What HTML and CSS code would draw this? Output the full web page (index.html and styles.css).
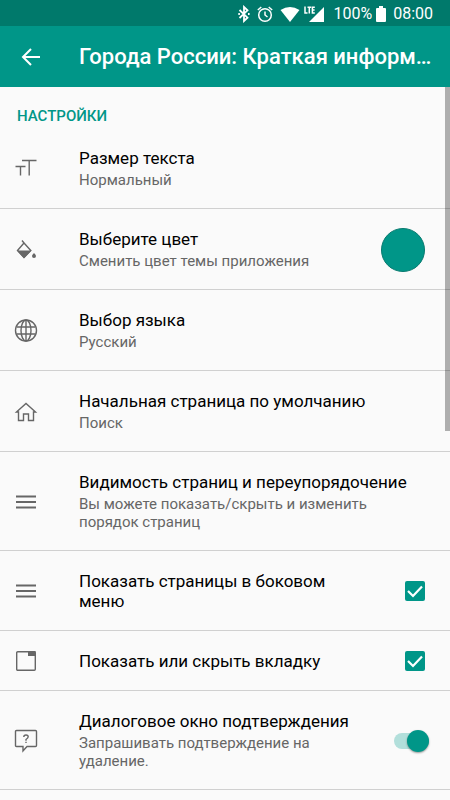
FILE: index.html
```html
<!DOCTYPE html>
<html lang="ru">
<head>
<meta charset="utf-8">
<meta name="viewport" content="width=device-width, initial-scale=1">
<title>Города России: Краткая информация</title>
<link rel="stylesheet" href="styles.css">
</head>
<body>
<div class="status">
  <svg width="12" height="18" viewBox="0 0 12 18" fill="none" stroke="#fff" stroke-width="1.8"><path d="M1.500 5l8 7.700L6 16V2l3.500 3.300-8 7.700"/><path d="M.3 9h1.600M10 9h1.600"/></svg>
  <svg class="alarm" width="16" height="18" viewBox="0 0 16 18" fill="none" stroke="#fff" stroke-width="1.500"><circle cx="8" cy="10" r="6.300"/><path d="M8 6.500V10l2.500 2M.8 5l3.500-3M15.200 5l-3.500-3"/></svg>
  <svg class="wifi" width="20" height="18" viewBox="0 0 20 18" fill="#fff"><path d="M.5 5Q10-1 19.500 5L10 17z"/></svg>
  <svg class="signal" width="20" height="18" viewBox="0 0 20 18"><path fill="#fff" d="M20 2v15H5z"/><path d="M0 1h11v9H0z" fill="#00796b"/><path fill="none" stroke="#fff" stroke-width="1.500" d="M1 1.500V8h2.500M3.500 2.200H7.200M5.300 2v6.500M10.800 2.200H8.400v5.700h2.400M8.400 5h2.200"/></svg>
  <span class="percent">100%</span>
  <svg class="battery" width="10" height="18" viewBox="0 0 10 18" fill="#fff"><path d="M3 1h4v2h2q1 0 1 1v12q0 1-1 1H1q-1 0-1-1V4q0-1 1-1h2z"/></svg>
  <span>08:00</span>
</div>
<header class="bar">
  <button class="back" aria-label="Назад"><svg width="24" height="24" viewBox="0 0 24 24" fill="none" stroke="#fff" stroke-width="2"><path d="M22 12H5M13 4L5 12l8 8"/></svg></button>
  <h1>Города России: Краткая информация</h1>
</header>
<main class="list">
  <h2>НАСТРОЙКИ</h2>
  <button class="row">
    <svg class="icon" viewBox="0 0 24 24"><path d="M8 3.500h14.500M15.200 3.500V18.500M1.500 9.500h10M6.500 9.500v9"/></svg>
    <span class="text"><span class="title">Размер текста</span><span class="sub">Нормальный</span></span>
  </button>
  <button class="row">
    <svg class="icon" viewBox="0 0 24 24"><path d="M8 2.500l2 2.500L3.500 12.500 10 19.500 16.800 12.500 10 5"/><path class="solid" d="M3 12.500h14.500L10 20.300zM20 15q2 2 2 3a2 2 0 0 1-4 0q0-1 2-3z"/></svg>
    <span class="text"><span class="title">Выберите цвет</span><span class="sub">Сменить цвет темы приложения</span></span>
    <span class="widget"><span class="swatch"></span></span>
  </button>
  <button class="row">
    <svg class="icon" viewBox="0 0 24 24"><circle cx="12" cy="11.500" r="10.500"/><ellipse cx="12" cy="11.500" rx="5" ry="10.500"/><path d="M12 1v21M2.500 8h19M2.500 15h19"/></svg>
    <span class="text"><span class="title">Выбор языка</span><span class="sub">Русский</span></span>
  </button>
  <button class="row">
    <svg class="icon" viewBox="0 0 24 24"><path d="M2.500 12l9.500-8.500 9.500 8.500h-2v8.500H14.500V14h-5v6.500H4.500V12z"/></svg>
    <span class="text"><span class="title">Начальная страница по умолчанию</span><span class="sub">Поиск</span></span>
  </button>
  <button class="row">
    <svg class="icon bars" viewBox="0 0 24 24"><path d="M2 6.500h20M2 12h20M2 17.500h20"/></svg>
    <span class="text"><span class="title">Видимость страниц и переупорядочение</span><span class="sub">Вы можете показать/скрыть и изменить порядок страниц</span></span>
  </button>
  <label class="row">
    <svg class="icon bars" viewBox="0 0 24 24"><path d="M2 6.500h20M2 12h20M2 17.500h20"/></svg>
    <span class="text"><span class="title">Показать страницы в боковом меню</span></span>
    <span class="widget check"><input type="checkbox" checked><svg viewBox="0 0 20 20"><path d="M3 10l5 5L17 5.500"/></svg></span>
  </label>
  <label class="row">
    <svg class="icon" viewBox="0 0 24 24"><rect x="2.700" y="2.700" width="18.600" height="18.600" rx="1"/><path class="solid" d="M14 2h7.500v5H14z"/></svg>
    <span class="text"><span class="title">Показать или скрыть вкладку</span></span>
    <span class="widget check"><input type="checkbox" checked><svg viewBox="0 0 20 20"><path d="M3 10l5 5L17 5.500"/></svg></span>
  </label>
  <label class="row">
    <svg class="icon" viewBox="0 0 24 24"><path d="M2.500 1.500h19q1 0 1 1v14q0 1-1 1H13L9 22V17.500H2.500q-1 0-1-1V2.500q0-1 1-1z"/><path d="M9.800 8q0-2 2.200-2t2.200 1.800Q14.200 9 12 10.500v1.200M12 12.700V14"/></svg>
    <span class="text"><span class="title">Диалоговое окно подтверждения</span><span class="sub">Запрашивать подтверждение на удаление.</span></span>
    <span class="widget toggle"><input type="checkbox" role="switch" checked></span>
  </label>
  <span class="scroll"></span>
</main>
</body>
</html>
```
FILE: styles.css
```css
* { box-sizing: border-box; }
body {
  margin: 0;
  min-height: 100vh;
  background: #fafafa;
  color: #000;
  font-family: Roboto, "Liberation Sans", sans-serif;
}
button {
  margin: 0;
  border: 0;
  padding: 0;
  background: none;
  color: inherit;
  font: inherit;
  text-align: left;
}
h1, h2 { margin: 0; font-weight: 500; }

.status {
  display: flex;
  align-items: center;
  justify-content: flex-end;
  height: 26px;
  padding: 2px 17px 0 0;
  background: #00796b;
  color: #fff;
  font-size: 16px;
  line-height: 24px;
}
.alarm { margin-left: 7px; }
.wifi { margin-left: 7px; }
.signal { margin-left: 4px; }
.percent { margin-left: 9px; }
.battery { margin: 0 7px 0 4px; }

.bar {
  display: flex;
  align-items: center;
  height: 61px;
  padding: 0 16px;
  background: #009688;
  color: #fff;
}
.back { flex: none; width: 63px; height: 24px; padding-left: 2px; }
.back svg { display: block; }
h1 {
  overflow: hidden;
  font-size: 22px;
  line-height: 30px;
  text-overflow: ellipsis;
  white-space: nowrap;
}

.list { position: relative; }
h2 {
  padding: 19px 17px 2px;
  color: #009688;
  font-size: 15px;
  line-height: 20px;
}
.row {
  display: grid;
  grid-template-columns: 65px 1fr auto;
  align-items: center;
  width: 100%;
  padding: 20px 0 19px 14px;
  border-bottom: 1px solid #d0d0d0;
}
.icon {
  width: 24px;
  height: 24px;
  margin: -4px 0;
  fill: none;
  stroke: #666;
  stroke-width: 1.4;
}
.bars { stroke-width: 2; }
.solid { fill: #666; stroke: none; }
.text { padding-right: 12px; }
.text:last-child { padding-right: 30px; }
.title, .sub { display: block; }
.title { font-size: 17px; line-height: 20px; }
.sub {
  margin-top: 3px;
  color: #666;
  font-size: 15px;
  line-height: 18px;
}

.widget {
  display: flex;
  justify-content: flex-end;
  width: 70px;
  margin: -12px 0;
  padding-right: 25px;
}
.swatch {
  width: 44px;
  height: 44px;
  border: 1px solid #087b70;
  border-radius: 50%;
  background: #009688;
}
input { appearance: none; margin: 0; }
.check { display: grid; }
.check input, .check svg { grid-area: 1 / 1; width: 20px; height: 20px; }
.check input { border-radius: 2px; background: #009688; }
.check svg { fill: none; stroke: #fff; stroke-width: 2.2; pointer-events: none; }
.toggle { padding-right: 21px; }
.toggle input {
  display: grid;
  align-items: center;
  width: 35px;
  height: 22px;
}
.toggle input::before, .toggle input::after { content: ""; grid-area: 1 / 1; }
.toggle input::before { height: 16px; border-radius: 8px; background: #b2dfdb; }
.toggle input::after {
  justify-self: end;
  width: 22px;
  height: 22px;
  border-radius: 50%;
  background: #009688;
  box-shadow: 0 1px 2px rgba(0, 0, 0, .4);
}

.scroll {
  position: absolute;
  top: 0;
  right: 0;
  width: 5px;
  height: 344px;
  background: rgba(0, 0, 0, .3);
}
```
